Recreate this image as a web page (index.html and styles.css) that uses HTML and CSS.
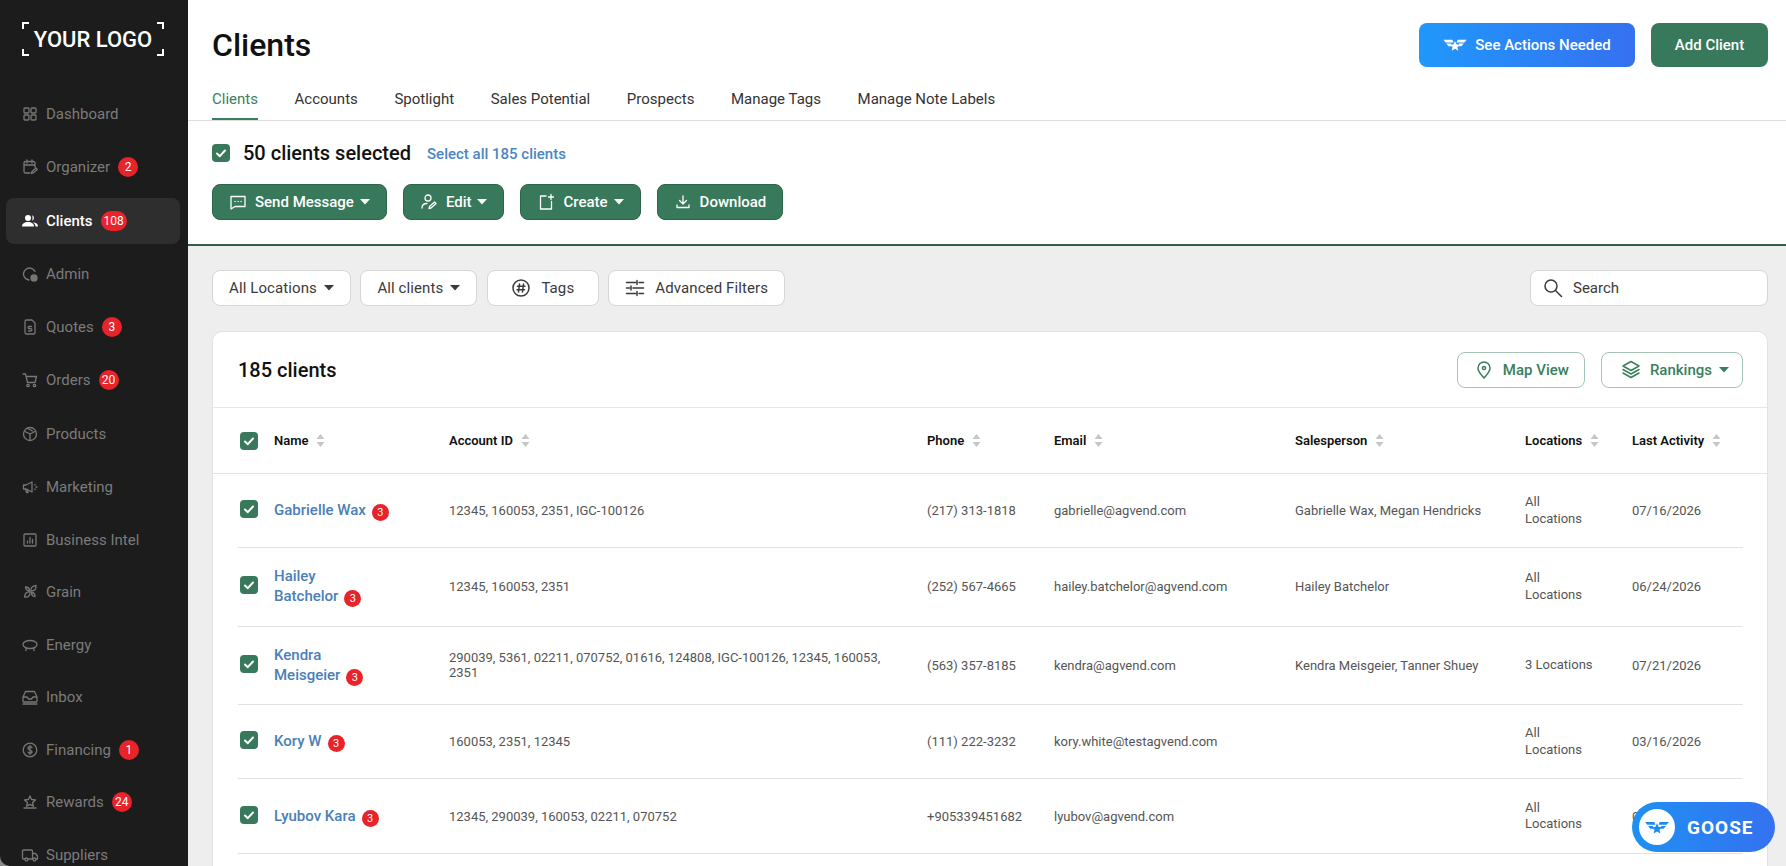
FILE: index.html
```html
<!DOCTYPE html>
<html lang="en">
<head>
    <meta charset="UTF-8">
    <title>Clients</title>
    <link rel="stylesheet" href="styles.css">
</head>
<body>
<svg class="sprites" width="0" height="0">
    <symbol id="wings" viewBox="0 0 40 24">
        <polygon points="20,5 22.5,10.8 29,11.4 24.1,15.6 25.6,22 20,18.6 14.4,22 15.9,15.6 11,11.4 17.5,10.8"/>
        <path d="M0 3h15.5l2 4.5H4z M5 9.5h8.5l-1 2.4 2.6 2.1H9z"/>
        <path d="M40 3H24.500l-2 4.500H36z M35 9.500h-8.500l1 2.400-2.600 2.100H31z"/>
    </symbol>
    <symbol id="caret" viewBox="0 0 10 6"><path d="M0 0h10L5 5.500z"/></symbol>
    <symbol id="sort" viewBox="0 0 9 13"><path d="M4.500 0L8.500 5H.5z M4.500 13L.5 8h8z"/></symbol>
    <symbol id="check" viewBox="0 0 18 18"><path d="M5 9.500l2.800 2.700L13 6.500" fill="none" stroke="#fff" stroke-width="2" stroke-linecap="round" stroke-linejoin="round"/></symbol>
</svg>

<aside class="sidebar">
    <div class="logo">
        <span class="corner tl"></span><span class="corner tr"></span>
        <span class="corner bl"></span><span class="corner br"></span>
        YOUR LOGO
    </div>
    <nav class="nav">
        <a class="nav-item"><svg class="nav-icon" viewBox="0 0 18 18"><rect x="3" y="3" width="5" height="5" rx="1"/><rect x="10" y="3" width="5" height="5" rx="1"/><rect x="3" y="10" width="5" height="5" rx="1"/><rect x="10" y="10" width="5" height="5" rx="1"/></svg>Dashboard</a>
        <a class="nav-item"><svg class="nav-icon" viewBox="0 0 18 18"><path d="M9 15H4.500A1.500 1.500 0 0 1 3 13.500V5a1.500 1.500 0 0 1 1.500-1.500h8A1.500 1.500 0 0 1 14 5v4M3 7h11M6 2v3M11 2v3M10.500 15.500l.5-2 4-3.500 1.200 1.400-4 3.500z"/></svg>Organizer<span class="badge">2</span></a>
        <a class="nav-item active"><svg class="nav-icon solid" viewBox="0 0 18 18"><circle cx="7" cy="6" r="3"/><path d="M1 14.500c0-3 2.500-4.500 6-4.500s6 1.500 6 4.500z"/><path d="M11 3.200a3 3 0 0 1 0 5.600c.8-1.800.8-3.800 0-5.600zM12 10.200c3 .2 5 1.600 5 4.300h-2.500c0-1.700-1-3.200-2.500-4.300z"/></svg>Clients<span class="badge">108</span></a>
        <a class="nav-item"><svg class="nav-icon" viewBox="0 0 18 18"><path d="M14 6.500A6 6 0 1 0 8 15"/><circle cx="13" cy="13" r="3" fill="#777"/></svg>Admin</a>
        <a class="nav-item"><svg class="nav-icon" viewBox="0 0 18 18"><path d="M4 3.500A1.500 1.500 0 0 1 5.500 2H11l3 3v9.500a1.500 1.500 0 0 1-1.500 1.500h-7A1.500 1.500 0 0 1 4 14.500zM10.500 8.500H8.200a1 1 0 0 0 0 2.200h1.500a1 1 0 0 1 0 2.300H7.500"/></svg>Quotes<span class="badge">3</span></a>
        <a class="nav-item"><svg class="nav-icon" viewBox="0 0 18 18"><path d="M2 3h2.500l2 8.500h7.500l1.500-6H5"/><circle cx="7" cy="14.500" r="1.200"/><circle cx="13.500" cy="14.500" r="1.200"/></svg>Orders<span class="badge">20</span></a>
        <a class="nav-item"><svg class="nav-icon" viewBox="0 0 18 18"><circle cx="9" cy="9" r="6.500"/><path d="M4 6.500L9 9l5-2.500M9 9v6M6.500 3.500l5 2.500"/></svg>Products</a>
        <a class="nav-item"><svg class="nav-icon" viewBox="0 0 18 18"><path d="M2.500 7v4h2.500l6 3V4L5 7zM4.500 11l1 3.500h1.500L6.500 11.500M14 6.500v.5M14 11v.5M15 9h1"/></svg>Marketing</a>
        <a class="nav-item"><svg class="nav-icon" viewBox="0 0 18 18"><rect x="3" y="3" width="12" height="12" rx="1"/><path d="M6.500 12v-2M9 12V6.500M11.500 12V8.500"/></svg>Business Intel</a>
        <a class="nav-item"><svg class="nav-icon" viewBox="0 0 18 18"><path d="M10 8c-.5-3 1-5 5-5.500.5 4-1.500 5.500-5 5.500zM9 9c-3-.5-5 1-5.500 5 4 .5 5.500-1.500 5.500-5zM8.500 7.500C6 7.500 4.500 6.500 4.500 4c2.500 0 4 1 4 3.500zM10.500 9.500c0 2.500 1 4 3.500 4 0-2.500-1-4-3.500-4z"/></svg>Grain</a>
        <a class="nav-item"><svg class="nav-icon" viewBox="0 0 18 18"><ellipse cx="9" cy="8.500" rx="7" ry="4"/><path d="M5 12.500V14.500M13 12.500V14.500"/></svg>Energy</a>
        <a class="nav-item"><svg class="nav-icon" viewBox="0 0 18 18"><path d="M2 9l2.500-5.500h9L16 9v4a1 1 0 0 1-1 1H3a1 1 0 0 1-1-1zM2 9h4l1.500 2h3L12 9h4M2 16h14"/></svg>Inbox</a>
        <a class="nav-item"><svg class="nav-icon" viewBox="0 0 18 18"><circle cx="9" cy="9" r="6.800"/><path d="M11 6.800C10.500 6 9.800 5.700 9 5.700c-1.200 0-2 .6-2 1.600C7 9.500 11 8.500 11 10.700c0 1-.8 1.600-2 1.600-.8 0-1.600-.3-2-1.100M9 4.500v9"/></svg>Financing<span class="badge">1</span></a>
        <a class="nav-item"><svg class="nav-icon" viewBox="0 0 18 18"><path d="M9 3l1.600 3.500 3.900.4-2.900 2.600.8 3.800L9 11.400l-3.400 1.900.8-3.800L3.500 6.900l3.900-.4zM3 15h12"/></svg>Rewards<span class="badge">24</span></a>
        <a class="nav-item"><svg class="nav-icon" viewBox="0 0 18 18"><path d="M4 13H2.500a1 1 0 0 1-1-1V5a1 1 0 0 1 1-1h8a1 1 0 0 1 1 1v8H7M11.500 7.500h3l2 2.500v3H15M11.500 13H12"/><circle cx="5.500" cy="13.500" r="1.500"/><circle cx="13.500" cy="13.500" r="1.500"/></svg>Suppliers</a>
    </nav>
</aside>

<main class="main">
    <header class="page-head">
        <div class="head-top">
            <h1 class="title">Clients</h1>
            <div class="head-actions">
                <button class="btn-actions"><svg class="wings-small"><use href="#wings"/></svg>See Actions Needed</button>
                <button class="btn-add">Add Client</button>
            </div>
        </div>
        <div class="tabs">
            <a class="tab current">Clients</a>
            <a class="tab">Accounts</a>
            <a class="tab">Spotlight</a>
            <a class="tab">Sales Potential</a>
            <a class="tab">Prospects</a>
            <a class="tab">Manage Tags</a>
            <a class="tab">Manage Note Labels</a>
        </div>
    </header>

    <section class="selection">
        <div class="sel-line">
            <span class="checkbox"><svg><use href="#check"/></svg></span>
            <span class="sel-count">50 clients selected</span>
            <a class="sel-all">Select all 185 clients</a>
        </div>
        <div class="sel-buttons">
            <button class="btn-green"><svg class="btn-icon" viewBox="0 0 18 18"><path d="M2 3.500h14v10H6l-4 2.500zM6 8.500h.1M9 8.500h.1M12 8.500h.1"/></svg>Send Message<svg class="caret"><use href="#caret"/></svg></button>
            <button class="btn-green"><svg class="btn-icon" viewBox="0 0 18 18"><circle cx="8" cy="5" r="3"/><path d="M2 15c0-3 2-4.500 5-4.500M9 15.500l.5-2 5-4.500 1.500 1.500-5 4.500z"/></svg>Edit<svg class="caret"><use href="#caret"/></svg></button>
            <button class="btn-green"><svg class="btn-icon" viewBox="0 0 18 18"><path d="M9 3H3.500v13h11V8.500M14 1.500v5M11.500 4h5"/></svg>Create<svg class="caret"><use href="#caret"/></svg></button>
            <button class="btn-green"><svg class="btn-icon" viewBox="0 0 18 18"><path d="M9 3v8M5.500 7.500L9 11l3.500-3.500M3 12v2.500h12V12"/></svg>Download</button>
        </div>
    </section>

    <section class="content">
        <div class="filters">
            <button class="btn-filter">All Locations<svg class="caret"><use href="#caret"/></svg></button>
            <button class="btn-filter">All clients<svg class="caret"><use href="#caret"/></svg></button>
            <button class="btn-filter tags"><svg class="filter-icon" viewBox="0 0 20 20"><circle cx="10" cy="10" r="8"/><path d="M8.500 6l-1 8M12.500 6l-1 8M6.500 8.300h7.500M6 11.700h7.500"/></svg>Tags</button>
            <button class="btn-filter"><svg class="filter-icon" viewBox="0 0 20 20"><path d="M1.500 4.500h9M14 4.500h4.500M12 2.500v4M1.500 10h3M8 10h10.500M6 8v4M1.500 15.500h9M14 15.500h4.500M12 13.500v4"/></svg>Advanced Filters</button>
            <label class="search">
                <svg class="filter-icon" viewBox="0 0 20 20"><circle cx="8" cy="8" r="6"/><path d="M12.500 12.500L18.500 18.500"/></svg>
                <input class="search-input" type="text" placeholder="Search"/>
            </label>
        </div>

        <div class="card">
            <div class="card-head">
                <h2 class="card-title">185 clients</h2>
                <div class="card-actions">
                    <button class="btn-outline"><svg class="filter-icon" viewBox="0 0 20 20"><path d="M10 18c-3-3.500-6-6-6-10a6 6 0 0 1 12 0c0 4-3 6.500-6 10z"/><circle cx="10" cy="8" r="1.600"/></svg>Map View</button>
                    <button class="btn-outline rankings"><svg class="filter-icon" viewBox="0 0 20 20"><path d="M10 1.500l8 4.500-8 4.500L2 6zM2 9.500l8 4.500 8-4.500M2 13l8 4.500 8-4.500"/></svg>Rankings<svg class="caret"><use href="#caret"/></svg></button>
                </div>
            </div>

            <div class="grid head-row">
                <span class="checkbox"><svg><use href="#check"/></svg></span>
                <span class="col-head">Name<svg class="sort"><use href="#sort"/></svg></span>
                <span class="col-head">Account ID<svg class="sort"><use href="#sort"/></svg></span>
                <span class="col-head">Phone<svg class="sort"><use href="#sort"/></svg></span>
                <span class="col-head">Email<svg class="sort"><use href="#sort"/></svg></span>
                <span class="col-head">Salesperson<svg class="sort"><use href="#sort"/></svg></span>
                <span class="col-head">Locations<svg class="sort"><use href="#sort"/></svg></span>
                <span class="col-head">Last Activity<svg class="sort"><use href="#sort"/></svg></span>
            </div>

            <div class="grid row">
                <span class="checkbox"><svg><use href="#check"/></svg></span>
                <a class="client-name">Gabrielle Wax<span class="badge small">3</span></a>
                <span>12345, 160053, 2351, IGC-100126</span>
                <span>(217) 313-1818</span>
                <span>gabrielle@agvend.com</span>
                <span>Gabrielle Wax, Megan Hendricks</span>
                <span class="loc">All<br>Locations</span>
                <span>07/16/2026</span>
            </div>
            <div class="grid row row-tall">
                <span class="checkbox"><svg><use href="#check"/></svg></span>
                <a class="client-name">Hailey<br>Batchelor<span class="badge small">3</span></a>
                <span>12345, 160053, 2351</span>
                <span>(252) 567-4665</span>
                <span>hailey.batchelor@agvend.com</span>
                <span>Hailey Batchelor</span>
                <span class="loc">All<br>Locations</span>
                <span>06/24/2026</span>
            </div>
            <div class="grid row row-tall">
                <span class="checkbox"><svg><use href="#check"/></svg></span>
                <a class="client-name">Kendra<br>Meisgeier<span class="badge small">3</span></a>
                <span class="ids">290039, 5361, 02211, 070752, 01616, 124808, IGC-100126, 12345, 160053, 2351</span>
                <span>(563) 357-8185</span>
                <span>kendra@agvend.com</span>
                <span>Kendra Meisgeier, Tanner Shuey</span>
                <span class="loc">3 Locations</span>
                <span>07/21/2026</span>
            </div>
            <div class="grid row">
                <span class="checkbox"><svg><use href="#check"/></svg></span>
                <a class="client-name">Kory W<span class="badge small">3</span></a>
                <span>160053, 2351, 12345</span>
                <span>(111) 222-3232</span>
                <span>kory.white@testagvend.com</span>
                <span></span>
                <span class="loc">All<br>Locations</span>
                <span>03/16/2026</span>
            </div>
            <div class="grid row">
                <span class="checkbox"><svg><use href="#check"/></svg></span>
                <a class="client-name">Lyubov Kara<span class="badge small">3</span></a>
                <span>12345, 290039, 160053, 02211, 070752</span>
                <span>+905339451682</span>
                <span>lyubov@agvend.com</span>
                <span></span>
                <span class="loc">All<br>Locations</span>
                <span>06/02/2026</span>
            </div>
        </div>
    </section>
</main>

<button class="goose"><span class="goose-mark"><svg class="wings-goose"><use href="#wings"/></svg></span>GOOSE</button>
</body>
</html>
```

FILE: styles.css
```css
*{margin:0;padding:0;box-sizing:border-box;}
html,body{height:100%;}
body{display:flex;height:866px;overflow:hidden;background:#8a8a8a;font-family:Roboto,"Liberation Sans",sans-serif;font-size:14px;color:#333;}
button{font-family:inherit;cursor:pointer;}
.sprites{position:absolute;}

/* sidebar */
.sidebar{width:188px;flex:none;background:#1c1c1c;border-bottom-left-radius:10px;overflow:hidden;padding:22px 8px 0 6px;}
.logo{position:relative;margin:0 16px;width:142px;height:34px;line-height:35px;text-align:center;color:#fff;font-size:22px;font-weight:500;white-space:nowrap;}
.corner{position:absolute;width:7px;height:7px;border:0 solid #fff;}
.corner.tl{left:0;top:0;border-width:2px 0 0 2px;}
.corner.tr{right:0;top:0;border-width:2px 2px 0 0;}
.corner.bl{left:0;bottom:0;border-width:0 0 2px 2px;}
.corner.br{right:0;bottom:0;border-width:0 2px 2px 0;}
.nav{margin-top:35px;}
.nav-item{display:flex;align-items:center;height:46px;margin-bottom:7.3px;padding-left:15px;border-radius:8px;color:#7b7b7b;font-size:15px;}
.nav-item:nth-child(n+8){margin-bottom:6.57px;}
.nav-icon{width:18px;height:18px;flex:none;margin-right:7px;fill:none;stroke:#777;stroke-width:1.3;stroke-linecap:round;stroke-linejoin:round;}
.nav-icon.solid{fill:#fff;stroke:none;}
.nav-item.active{background:#2e2e2e;color:#fff;font-weight:500;}
.badge{display:inline-block;min-width:20px;height:20px;line-height:20px;margin-left:8px;padding:0 3px;border-radius:10px;background:#e8232a;color:#fff;font-size:12px;font-weight:400;text-align:center;}
.badge.small{min-width:17px;width:17px;height:17px;line-height:17px;margin-left:6px;padding:0;font-size:11px;vertical-align:-1px;}

/* header */
.main{flex:1;min-width:0;display:flex;flex-direction:column;background:#fff;}
.page-head{height:121px;border-bottom:1px solid #dedede;padding:23px 18px 0 24px;}
.head-top{display:flex;justify-content:space-between;align-items:center;height:44px;}
.title{font-size:32px;font-weight:500;color:#111;}
.head-actions{display:flex;gap:16px;}
.btn-actions,.btn-add{height:44px;border:0;border-radius:8px;color:#fff;font-size:15px;font-weight:500;}
.btn-actions{width:216px;display:flex;align-items:center;justify-content:center;gap:8px;background:linear-gradient(90deg,#2098fb,#3570f0);}
.wings-small{width:24px;height:14px;fill:#fff;}
.btn-add{width:117px;background:#37795a;}
.tabs{display:flex;gap:36.600px;margin-top:22px;}
.tab{display:block;height:31px;line-height:20px;border-bottom:2px solid transparent;font-size:15px;color:#333;}
.tab.current{color:#3b7f5e;border-bottom-color:#3b7f5e;}

/* selected row */
.selection{height:125px;padding:23px 0 0 24px;border-bottom:2px solid #2f5f47;}
.sel-line{display:flex;align-items:center;height:18px;}
.checkbox{display:block;width:18px;height:18px;background:#37795a;border-radius:4px;}
.checkbox svg{display:block;width:18px;height:18px;}
.sel-count{margin-left:13px;font-size:20px;font-weight:500;color:#111;}
.sel-all{margin-left:16px;padding-top:2px;font-size:15px;font-weight:500;color:#4a86c5;}
.sel-buttons{display:flex;gap:16px;margin-top:22px;}
.btn-green{display:flex;align-items:center;height:36px;padding:0 16px;background:#37795a;border:1px solid #2c6549;border-radius:8px;color:#fff;font-size:15px;font-weight:500;}
.btn-icon{width:18px;height:18px;margin-right:8px;fill:none;stroke:#fff;stroke-width:1.3;stroke-linecap:round;stroke-linejoin:round;}
.caret{width:10px;height:6px;margin-left:7px;fill:currentColor;}
.btn-green .caret{margin-left:6px;}

/* filters */
.content{flex:1;min-height:0;display:flex;flex-direction:column;background:#eee;padding:24px 18px 0 24px;}
.filters{display:flex;gap:9.500px;height:36px;}
.btn-filter,.search{display:flex;align-items:center;height:36px;background:#fff;border:1px solid #d6d6d6;border-radius:8px;font-size:15px;letter-spacing:.1px;color:#3a3a3a;}
.btn-filter{padding:0 16px;}
.btn-filter.tags{width:112px;justify-content:center;}
.filter-icon{width:20px;height:20px;margin-right:10px;fill:none;stroke:currentColor;stroke-width:1.5;stroke-linecap:round;stroke-linejoin:round;}
.search{margin-left:auto;width:238px;padding-left:12px;}
.search-input{border:0;outline:0;width:150px;font:inherit;background:none;}
.search-input::placeholder{color:#3a3a3a;opacity:1;}

/* card + table */
.card{flex:1;margin-top:25px;background:#fff;border:1px solid #e2e2e2;border-bottom:0;border-radius:10px 10px 0 0;}
.card-head{display:flex;justify-content:space-between;align-items:center;height:76px;padding:0 24px 0 25px;border-bottom:1px solid #e8e8e8;}
.card-title{font-size:20px;font-weight:500;color:#111;}
.card-actions{display:flex;gap:16px;}
.btn-outline{display:flex;align-items:center;height:36px;padding:0 15px 0 16px;background:#fff;border:1px solid #a5c4b5;border-radius:8px;color:#3b7f5e;font-size:15px;font-weight:500;}
.btn-outline.rankings{padding:0 13px 0 19px;}
.btn-outline .filter-icon{margin-right:9px;}
.grid{display:grid;grid-template-columns:36px 175px 478px 127px 241px 230px 107px 111px;align-items:center;font-size:13px;color:#555;}
.grid .checkbox{margin-left:2px;}
.head-row{height:66px;padding:0 24px 0 25px;border-bottom:1px solid #e4e4e4;}
.col-head{display:flex;align-items:center;font-weight:600;color:#111;}
.sort{width:9px;height:13px;margin-left:8px;fill:#c6c6c6;}
.row{height:74px;margin:0 24px 0 25px;border-bottom:1px solid #e2e2e2;}
.row .checkbox{margin-bottom:3px;}
.row-tall{height:78.500px;}
.row:last-child{height:75px;}
.client-name{font-size:15px;font-weight:500;line-height:20px;color:#4a80b8;white-space:nowrap;}
.ids{padding-right:24px;line-height:15px;}
.loc{line-height:16.500px;}

/* floating button */
.goose{position:absolute;right:11px;bottom:14px;display:flex;align-items:center;width:143px;height:50px;padding-left:7px;border:0;border-radius:25px;background:linear-gradient(90deg,#1f90f2,#3472f0);color:#fff;font-size:19px;font-weight:700;letter-spacing:1px;}
.goose-mark{display:flex;align-items:center;justify-content:center;width:36px;height:36px;margin-right:12px;background:#fff;border-radius:50%;}
.wings-goose{width:24px;height:15px;fill:#1f8af0;}
```
